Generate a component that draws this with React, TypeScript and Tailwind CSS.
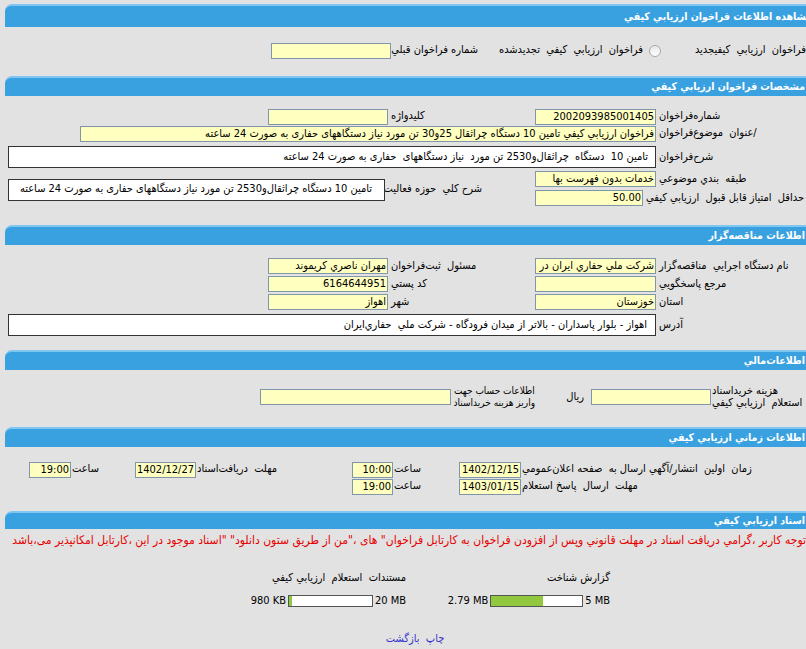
import React from "react";

function Bar({ title, className = "" }: { title: string; className?: string }) {
  return (
    <div
      className={
        "flex items-center rounded-tl-[7px] border-t-2 border-[#7fc6f0] bg-[#3aa1e0] text-[10.5px] font-bold whitespace-nowrap text-white " +
        className
      }
    >
      {title}
    </div>
  );
}

function Inp({ className = "", children }: { className?: string; children?: React.ReactNode }) {
  return (
    <div
      className={
        "h-[16px] shrink-0 overflow-hidden whitespace-nowrap border border-[#7f97a9] bg-[#ffffc0] px-[1px] text-[11px] leading-[14px] text-black " +
        className
      }
    >
      {children}
    </div>
  );
}

function Box({ className = "", children }: { className?: string; children?: React.ReactNode }) {
  return (
    <div
      className={
        "flex h-[22px] shrink-0 items-center overflow-hidden whitespace-nowrap border border-[#333] bg-white text-[11px] " +
        className
      }
    >
      {children}
    </div>
  );
}

function Radio() {
  return <div className="h-[12px] w-[12px] shrink-0 rounded-full border border-[#a8a8a8] bg-gradient-to-b from-[#e8e8e8] to-white" />;
}

function Meter({ pct, className }: { pct: string; className: string }) {
  return (
    <div className={"flex h-[12px] justify-end border border-[#555] bg-white " + className}>
      <div className={"h-full bg-[#92c83e] " + pct} />
    </div>
  );
}

function Lbl({ className = "", children }: { className?: string; children?: React.ReactNode }) {
  return <div className={"shrink-0 whitespace-nowrap text-left " + className}>{children}</div>;
}

export default function App() {
  return (
    <div className="h-[649px] w-[806px] overflow-hidden bg-[#e2e2e2] font-['Tahoma','DejaVu_Sans_Condensed','DejaVu_Sans',sans-serif] text-[11px] text-black">
      <div dir="rtl" className="ml-[5px] w-[820px] pt-[4px]">
        <Bar title="مشاهده اطلاعات فراخوان ارزيابي كيفي" className="h-[23px] pr-[13px]" />

        {/* نوع فراخوان */}
        <div className="mt-[15px] flex h-[17px] items-center whitespace-nowrap pr-[2px]">
          <Radio />
          <div className="w-[150px] shrink-0 pr-[5px]">فراخوان&nbsp; ارزيابي&nbsp; كيفيجديد</div>
          <Radio />
          <div className="w-[171px] shrink-0 pr-[6px]">فراخوان&nbsp; ارزيابي&nbsp; كيفي&nbsp; تجديدشده</div>
          <div className="w-[87px] shrink-0">شماره فراخوان قبلي</div>
          <Inp className="w-[120px]" />
        </div>

        <Bar title="مشخصات فراخوان ارزيابي كيفي" className="mt-[17px] h-[20px] pr-[20px]" />
        <div className="pr-[17px] pl-[3px]">
          <div className="mt-[12px] flex h-[17px] items-center">
            <Lbl className="w-[152px] pl-[3px]">شماره‌فراخوان</Lbl>
            <Inp className="w-[121px]">2002093985001405</Inp>
            <Lbl className="w-[147px] pl-[3px]">كليدواژه</Lbl>
            <Inp className="w-[120px]" />
          </div>
          <div className="flex h-[17px] items-center">
            <Lbl className="w-[152px] pl-[3px]">/عنوان&nbsp; موضوع‌فراخوان</Lbl>
            <Inp className="w-[576px]">
              فراخوان ارزيابي كيفي تامين 10 دستگاه چراثقال 25و30 تن مورد نياز دستگاههاى حفارى به صورت 24 ساعته
            </Inp>
          </div>
          <div className="mt-[4px] flex items-center">
            <Lbl className="w-[152px] pl-[3px]">شرح‌فراخوان</Lbl>
            <Box className="w-[648px] pr-[7px]">
              تامين 10&nbsp; دستگاه&nbsp; چراثقال‌و2530 تن مورد&nbsp; نياز دستگاههاى&nbsp; حفارى به صورت 24 ساعته
            </Box>
          </div>
          <div className="mt-[2px] flex">
            <div className="w-[273px] shrink-0">
              <div className="flex h-[18px] items-center">
                <Lbl className="w-[152px] pl-[3px]">طبقه&nbsp; بندي موضوعي</Lbl>
                <Inp className="w-[121px]">خدمات بدون فهرست بها</Inp>
              </div>
              <div className="mt-[1px] flex h-[18px] items-center">
                <Lbl className="w-[165px] pl-[3px]">حداقل&nbsp; امتياز قابل قبول&nbsp; ارزيابي كيفي</Lbl>
                <Inp className="w-[108px]">50.00</Inp>
              </div>
            </div>
            <div className="flex items-center pt-[2px]">
              <div className="w-[53px] shrink-0" />
              <div className="w-[97px] shrink-0 whitespace-nowrap">شرح كلي&nbsp; حوزه فعاليت</div>
              <Box className="w-[377px] pr-[12px]">
                تامين 10 دستگاه چراثقال‌و2530 تن مورد نياز دستگاههاى حفارى به صورت 24 ساعته
              </Box>
            </div>
          </div>
        </div>

        <Bar title="اطلاعات مناقصه‌گزار" className="mt-[18px] h-[20px] pr-[20px]" />
        <div className="pr-[17px] pl-[3px]">
          <div className="mt-[12px] flex h-[18px] items-center">
            <Lbl className="w-[152px] pl-[3px]">نام دستگاه اجرايي&nbsp; مناقصه‌گزار</Lbl>
            <Inp className="w-[121px]">شركت ملي حفاري ايران در</Inp>
            <Lbl className="w-[147px] pl-[3px]">مسئول&nbsp; ثبت‌فراخوان</Lbl>
            <Inp className="w-[120px]">مهران ناصري كريموند</Inp>
          </div>
          <div className="flex h-[18px] items-center">
            <Lbl className="w-[152px] pl-[3px]">مرجع پاسخگويي</Lbl>
            <Inp className="w-[121px]" />
            <Lbl className="w-[147px] pl-[3px]">كد پستي</Lbl>
            <Inp className="w-[120px]">6164644951</Inp>
          </div>
          <div className="flex h-[18px] items-center">
            <Lbl className="w-[152px] pl-[3px]">استان</Lbl>
            <Inp className="w-[121px]">خوزستان</Inp>
            <Lbl className="w-[147px] pl-[3px]">شهر</Lbl>
            <Inp className="w-[120px]">اهواز</Inp>
          </div>
          <div className="mt-[3px] flex items-center">
            <Lbl className="w-[152px] pl-[3px]">آدرس</Lbl>
            <Box className="w-[648px] pr-[8px]">
              اهواز - بلوار پاسداران - بالاتر از ميدان فرودگاه - شركت ملي&nbsp; حفاري‌ايران
            </Box>
          </div>
        </div>

        <Bar title="اطلاعات‌مالي" className="mt-[14px] h-[20px] pr-[20px]" />
        <div className="pr-[17px] pl-[3px]">
          <div className="mt-[15px] flex h-[24px] items-center leading-[12px]">
            <Lbl className="w-[97px] pl-[1px]">
              هزينه خريداسناد
              <br />
              استعلام&nbsp; ارزيابي كيفي
            </Lbl>
            <Inp className="w-[120px]" />
            <div className="w-[56px] shrink-0 pr-[7px]">ريال</div>
            <Lbl className="w-[84px] pl-[3px] text-[10px]">
              اطلاعات حساب جهت
              <br />
              واريز هزينه خريداسناد
            </Lbl>
            <Inp className="w-[191px]" />
          </div>
        </div>

        <Bar title="اطلاعات زماني ارزيابي كيفي" className="mt-[18px] h-[20px] pr-[20px]" />
        <div className="pr-[17px] pl-[3px]">
          <div className="mt-[14px] flex h-[17px] items-center">
            <Lbl className="w-[287px] pl-[1px]">زمان&nbsp; اولين&nbsp; انتشار/آگهي ارسال به&nbsp; صفحه اعلان‌عمومي</Lbl>
            <Inp className="w-[62px]">1402/12/15</Inp>
            <Lbl className="w-[66px] pl-[1px]">ساعت</Lbl>
            <Inp className="w-[41px]">10:00</Inp>
            <Lbl className="w-[156px] pl-[1px]">مهلت&nbsp; دريافت‌اسناد</Lbl>
            <Inp className="w-[61px]">1402/12/27</Inp>
            <Lbl className="w-[64px] pl-[1px]">ساعت</Lbl>
            <Inp className="w-[42px]">19:00</Inp>
          </div>
          <div className="flex h-[17px] items-center">
            <Lbl className="w-[287px] pl-[1px]">مهلت&nbsp; ارسال&nbsp; پاسخ استعلام</Lbl>
            <Inp className="w-[62px]">1403/01/15</Inp>
            <Lbl className="w-[66px] pl-[1px]">ساعت</Lbl>
            <Inp className="w-[41px]">19:00</Inp>
          </div>
        </div>

        <Bar title="اسناد ارزيابي كيفي" className="mt-[16px] h-[18px] pr-[20px]" />
        <div className="mt-[3px] h-[16px] whitespace-nowrap pr-[19px] text-[12px] leading-[16px] text-[#e60000]">
          توجه كاربر ،گرامي دريافت اسناد در مهلت قانوني وپس از افزودن فراخوان به كارتابل فراخوان" هاى ،"من از طريق ستون دانلود" "اسناد موجود در اين ،كارتابل امكانپذير مى،باشد
        </div>
        <div className="mt-[23px] flex h-[14px] items-center pr-[215px]">
          <div className="w-[204px] shrink-0">گزارش شناخت</div>
          <div>مستندات&nbsp; استعلام&nbsp; ارزيابي كيفي</div>
        </div>
        <div className="mt-[9px] flex h-[14px] items-center pr-[215px]">
          <div className="flex w-[204px] shrink-0 items-center gap-[2px]">
            <span dir="ltr">5 MB</span>
            <Meter pct="w-[57%]" className="w-[93px]" />
            <span dir="ltr">2.79 MB</span>
          </div>
          <div className="flex items-center gap-[2px]">
            <span dir="ltr">20 MB</span>
            <Meter pct="w-[4%]" className="w-[85px]" />
            <span dir="ltr">980 KB</span>
          </div>
        </div>
        <div className="mt-[23px] text-center text-[#3333cc]">
          <a className="cursor-pointer">چاپ</a>&nbsp; <a className="cursor-pointer">بازگشت</a>
        </div>
      </div>
    </div>
  );
}
